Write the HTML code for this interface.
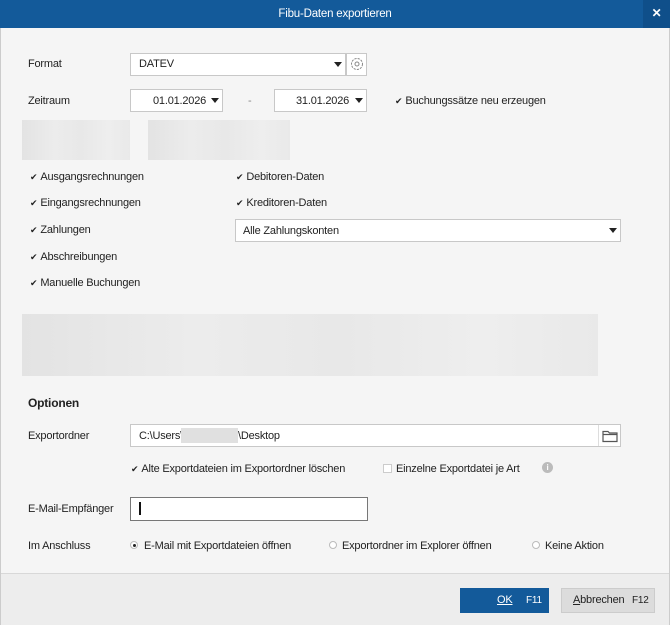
<!DOCTYPE html>
<html><head><meta charset="utf-8"><style>
*{box-sizing:border-box;margin:0;padding:0}
body{width:670px;height:625px;overflow:hidden;background:#f5f5f5;font-family:"Liberation Sans",sans-serif;font-size:11px;color:#222;position:relative;letter-spacing:-0.2px}
.a{position:absolute;white-space:nowrap}
.box{position:absolute;background:#fff;border:1px solid #c8c8c8}
.tri{position:absolute;width:0;height:0;border-left:4px solid transparent;border-right:4px solid transparent;border-top:5px solid #222}
.cb{position:absolute;font-size:11px;line-height:12px;top:0}
.cb::before{content:"✔";font-size:9px;margin-right:3px;color:#222}
.blur{position:absolute;background:linear-gradient(90deg,#e3e3e3 0%,#ececec 30%,#e8e8e8 55%,#eeeeee 80%,#e9e9e9 100%)}
.rad{position:absolute;width:8px;height:8px;border:1px solid #bbb;border-radius:50%;background:#fff}
</style></head><body>
<div class="a" style="left:0;top:0;width:670px;height:28px;background:#135a9a"></div>
<div class="a" style="left:643px;top:0;width:27px;height:28px;background:#0f4f8a;color:#fff;font-weight:bold;text-align:center;line-height:27px;font-size:12px">✕</div>
<div class="a" style="left:0;top:0;width:670px;line-height:28px;text-align:center;color:#fff;font-size:11.5px">Fibu-Daten exportieren</div>
<div class="a" style="left:0;top:28px;width:1px;height:597px;background:#ccc"></div>
<div class="a" style="left:669px;top:28px;width:1px;height:597px;background:#ccc"></div>

<div class="a" style="left:28px;top:58px">Format</div>
<div class="box" style="left:130px;top:53px;width:216px;height:23px"></div>
<div class="a" style="left:139px;top:58px">DATEV</div>
<div class="tri" style="left:334px;top:62px"></div>
<div class="box" style="left:346px;top:53px;width:21px;height:23px"></div>
<svg class="a" style="left:349px;top:56px" width="16" height="16" viewBox="0 0 16 16"><circle cx="8" cy="8" r="5.5" fill="none" stroke="#888" stroke-width="1" stroke-dasharray="2.2 1.1"/><circle cx="8" cy="8" r="2" fill="none" stroke="#888"/></svg>

<div class="a" style="left:28px;top:95px">Zeitraum</div>
<div class="box" style="left:130px;top:89px;width:93px;height:23px"></div>
<div class="a" style="left:153px;top:95px">01.01.2026</div>
<div class="tri" style="left:211px;top:98px"></div>
<div class="a" style="left:248px;top:95px;color:#888">-</div>
<div class="box" style="left:274px;top:89px;width:93px;height:23px"></div>
<div class="a" style="left:296px;top:95px">31.01.2026</div>
<div class="tri" style="left:355px;top:98px"></div>
<div class="cb" style="left:395px;top:95px">Buchungssätze neu erzeugen</div>

<div class="blur" style="left:22px;top:120px;width:108px;height:40px"></div>
<div class="blur" style="left:148px;top:120px;width:142px;height:40px"></div>

<div class="cb" style="left:30px;top:171px">Ausgangsrechnungen</div>
<div class="cb" style="left:30px;top:197px">Eingangsrechnungen</div>
<div class="cb" style="left:30px;top:224px">Zahlungen</div>
<div class="cb" style="left:30px;top:251px">Abschreibungen</div>
<div class="cb" style="left:30px;top:277px">Manuelle Buchungen</div>
<div class="cb" style="left:236px;top:171px">Debitoren-Daten</div>
<div class="cb" style="left:236px;top:197px">Kreditoren-Daten</div>
<div class="box" style="left:235px;top:219px;width:386px;height:23px"></div>
<div class="a" style="left:243px;top:225px">Alle Zahlungskonten</div>
<div class="tri" style="left:609px;top:228px"></div>

<div class="blur" style="left:22px;top:314px;width:576px;height:62px"></div>

<div class="a" style="left:28px;top:396px;font-size:12px;font-weight:bold;color:#222">Optionen</div>

<div class="a" style="left:28px;top:430px">Exportordner</div>
<div class="box" style="left:130px;top:424px;width:491px;height:23px"></div>
<div class="a" style="left:139px;top:430px">C:\Users\</div>
<div class="a" style="left:181px;top:428px;width:57px;height:15px;background:#e0e0e0"></div>
<div class="a" style="left:238px;top:430px">\Desktop</div>
<div class="a" style="left:598px;top:425px;width:1px;height:21px;background:#ddd"></div>
<svg class="a" style="left:601px;top:428px" width="18" height="16" viewBox="0 0 18 16"><path d="M2 3.5h5l1.5 1.5h7.5v8.5h-14z M2 6.5h14" fill="none" stroke="#555" stroke-width="1.2"/></svg>

<div class="cb" style="left:131px;top:463px">Alte Exportdateien im Exportordner löschen</div>
<div class="a" style="left:383px;top:464px;width:9px;height:9px;border:1px solid #ccc;background:#fff"></div>
<div class="a" style="left:396px;top:463px">Einzelne Exportdatei je Art</div>
<div class="a" style="left:542px;top:462px;width:11px;height:11px;border-radius:50%;background:#bbb;color:#fff;font-size:8px;line-height:11px;text-align:center;font-weight:bold">i</div>

<div class="a" style="left:28px;top:503px">E-Mail-Empfänger</div>
<div class="a" style="left:130px;top:497px;width:238px;height:24px;background:#fff;border:1px solid #777"></div>
<div class="a" style="left:139px;top:502px;width:1.5px;height:13px;background:#111"></div>

<div class="a" style="left:28px;top:540px">Im Anschluss</div>
<div class="rad" style="left:130px;top:541px"></div><div class="a" style="left:133px;top:544px;width:3px;height:3px;background:#222;border-radius:50%"></div>
<div class="a" style="left:144px;top:540px">E-Mail mit Exportdateien öffnen</div>
<div class="rad" style="left:329px;top:541px"></div>
<div class="a" style="left:342px;top:540px">Exportordner im Explorer öffnen</div>
<div class="rad" style="left:532px;top:541px"></div>
<div class="a" style="left:545px;top:540px">Keine Aktion</div>

<div class="a" style="left:1px;top:573px;width:668px;height:52px;background:#ededed;border-top:1px solid #d8d8d8"></div>
<div class="a" style="left:460px;top:588px;width:89px;height:25px;background:#135a9a;color:#fff;line-height:25px"><span style="position:absolute;left:37px;text-decoration:underline">OK</span><span style="position:absolute;left:66px;font-size:10px">F11</span></div>
<div class="a" style="left:561px;top:588px;width:94px;height:25px;background:#dcdcdc;border:1px solid #ccc;line-height:23px"><span style="position:absolute;left:11px"><u>A</u>bbrechen</span><span style="position:absolute;left:70px;font-size:10px">F12</span></div>
</body></html>
